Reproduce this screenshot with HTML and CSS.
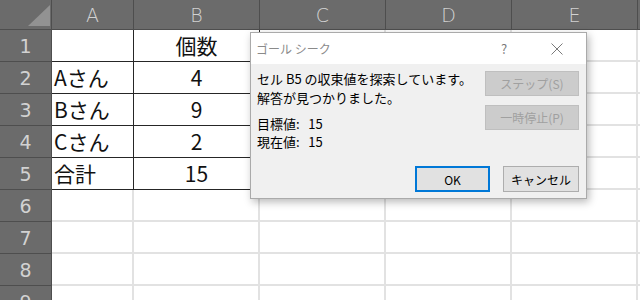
FILE: index.html
```html
<!DOCTYPE html>
<html lang="ja">
<head>
<meta charset="utf-8">
<link rel="stylesheet" href="styles.css">
</head>
<body>
<div class="sheet">
  <div class="grid">
    <div class="corner"><span class="tri"></span></div>
    <div class="ch">A</div>
    <div class="ch">B</div>
    <div class="ch">C</div>
    <div class="ch">D</div>
    <div class="ch">E</div>
    <div class="ch last"></div>

    <div class="rh">1</div>
    <div class="c d"></div><div class="c d ctr">個数</div><div class="c"></div><div class="c"></div><div class="c"></div><div class="c"></div>
    <div class="rh">2</div>
    <div class="c d">Aさん</div><div class="c d ctr">4</div><div class="c"></div><div class="c"></div><div class="c"></div><div class="c"></div>
    <div class="rh">3</div>
    <div class="c d">Bさん</div><div class="c d ctr">9</div><div class="c"></div><div class="c"></div><div class="c"></div><div class="c"></div>
    <div class="rh">4</div>
    <div class="c d">Cさん</div><div class="c d ctr">2</div><div class="c"></div><div class="c"></div><div class="c"></div><div class="c"></div>
    <div class="rh">5</div>
    <div class="c d">合計</div><div class="c d ctr">15</div><div class="c"></div><div class="c"></div><div class="c"></div><div class="c"></div>
    <div class="rh">6</div>
    <div class="c"></div><div class="c"></div><div class="c"></div><div class="c"></div><div class="c"></div><div class="c"></div>
    <div class="rh">7</div>
    <div class="c"></div><div class="c"></div><div class="c"></div><div class="c"></div><div class="c"></div><div class="c"></div>
    <div class="rh">8</div>
    <div class="c"></div><div class="c"></div><div class="c"></div><div class="c"></div><div class="c"></div><div class="c"></div>
    <div class="rh">9</div>
    <div class="c"></div><div class="c"></div><div class="c"></div><div class="c"></div><div class="c"></div><div class="c"></div>
  </div>

  <div class="dialog">
    <div class="titlebar">
      <span class="title">ゴール シーク</span>
      <span class="help">?</span>
      <span class="close">
        <svg width="12" height="12" viewBox="0 0 12 12"><path d="M0.5 0.5 L11.5 11.5 M11.5 0.5 L0.5 11.5" stroke="#7a7a7a" stroke-width="1" fill="none"/></svg>
      </span>
    </div>
    <div class="body">
      <div class="msg">
        <div class="line">セル B5 の収束値を探索しています。</div>
        <div class="line">解答が見つかりました。</div>
        <div class="vals">
          <div class="line">目標値:&nbsp;&nbsp;&nbsp;15</div>
          <div class="line">現在値:&nbsp;&nbsp;&nbsp;15</div>
        </div>
      </div>
      <div class="side">
        <div class="btn dis">ステップ(S)</div>
        <div class="btn dis">一時停止(P)</div>
      </div>
    </div>
    <div class="footer">
      <div class="btn ok">OK</div>
      <div class="btn cancel">キャンセル</div>
    </div>
  </div>
</div>
</body>
</html>
```

FILE: styles.css
```css
html, body {
  margin: 0;
  padding: 0;
  background: #ffffff;
  overflow: hidden;
}
.sheet {
  position: relative;
  width: 640px;
  height: 300px;
  overflow: hidden;
  font-family: "Noto Sans CJK JP", "Liberation Sans", sans-serif;
}
.grid {
  display: grid;
  grid-template-columns: 52px 82px 126px 126px 126px 126px 2px;
  grid-template-rows: 30px repeat(9, 32px);
}
.corner {
  background: #6b6b6b;
  border-right: 1px solid #4e4e4e;
  border-bottom: 1px solid #4e4e4e;
  position: relative;
}
.tri {
  position: absolute;
  right: 1px;
  bottom: 3px;
  width: 0;
  height: 0;
  border-left: 22px solid transparent;
  border-bottom: 21px solid #929292;
}
.ch {
  background: #6b6b6b;
  color: #d2d2d2;
  border-right: 1px solid #4e4e4e;
  border-bottom: 1px solid #4e4e4e;
  display: flex;
  align-items: center;
  justify-content: center;
  font-family: "DejaVu Sans", sans-serif;
  font-weight: 300;
  font-size: 19px;
}
.ch.last { border-right: none; }
.rh {
  background: #6b6b6b;
  color: #d2d2d2;
  border-right: 1px solid #4e4e4e;
  border-bottom: 1px solid #4e4e4e;
  display: flex;
  align-items: center;
  justify-content: center;
  font-family: "DejaVu Sans", sans-serif;
  font-size: 19px;
}
.c {
  border-right: 2px solid #e2e2e2;
  border-bottom: 2px solid #e2e2e2;
  box-sizing: border-box;
  display: flex;
  align-items: center;
  padding-left: 2px;
  font-size: 21px;
  color: #111;
  line-height: 1;
}
.c.d {
  border-right: 1px solid #262626;
  border-bottom: 1px solid #262626;
}
.c.ctr {
  justify-content: center;
  padding-left: 0;
}

.dialog {
  position: absolute;
  left: 250px;
  top: 32px;
  width: 337px;
  height: 167px;
  box-sizing: border-box;
  background: #f0f0f0;
  border: 1px solid #aaaaaa;
  box-shadow: 2px 3px 8px rgba(0, 0, 0, 0.28);
  display: flex;
  flex-direction: column;
  font-size: 13px;
  color: #000;
}
.titlebar {
  height: 31px;
  background: #ffffff;
  display: flex;
  align-items: center;
  padding-left: 5px;
}
.title {
  color: #8a8a8a;
  font-size: 12px;
  flex: 1;
}
.help {
  color: #7a7a7a;
  font-size: 13px;
  width: 20px;
  margin-right: 37px;
  text-align: center;
}
.close {
  width: 14px;
  margin-right: 21px;
  display: flex;
  align-items: center;
}
.body {
  display: flex;
  padding: 5px 7px 0 6px;
  flex: 1;
}
.msg { flex: 1; }
.line {
  line-height: 19px;
  white-space: nowrap;
}
.vals { margin-top: 8px; }
.vals .line { line-height: 18px; }
.side {
  display: flex;
  flex-direction: column;
  gap: 9px;
  padding-top: 2px;
}
.btn {
  box-sizing: border-box;
  height: 25px;
  display: flex;
  align-items: center;
  justify-content: center;
  background: #e1e1e1;
  border: 1px solid #adadad;
  font-size: 12px;
}
.btn.dis {
  width: 94px;
  background: #cccccc;
  border-color: #bfbfbf;
  color: #a0a0a0;
}
.footer {
  display: flex;
  justify-content: flex-end;
  gap: 13px;
  padding: 0 7px 6px 0;
}
.btn.ok {
  width: 75px;
  height: 26px;
  border: 2px solid #0078d7;
}
.btn.cancel {
  width: 76px;
  height: 26px;
}
```
